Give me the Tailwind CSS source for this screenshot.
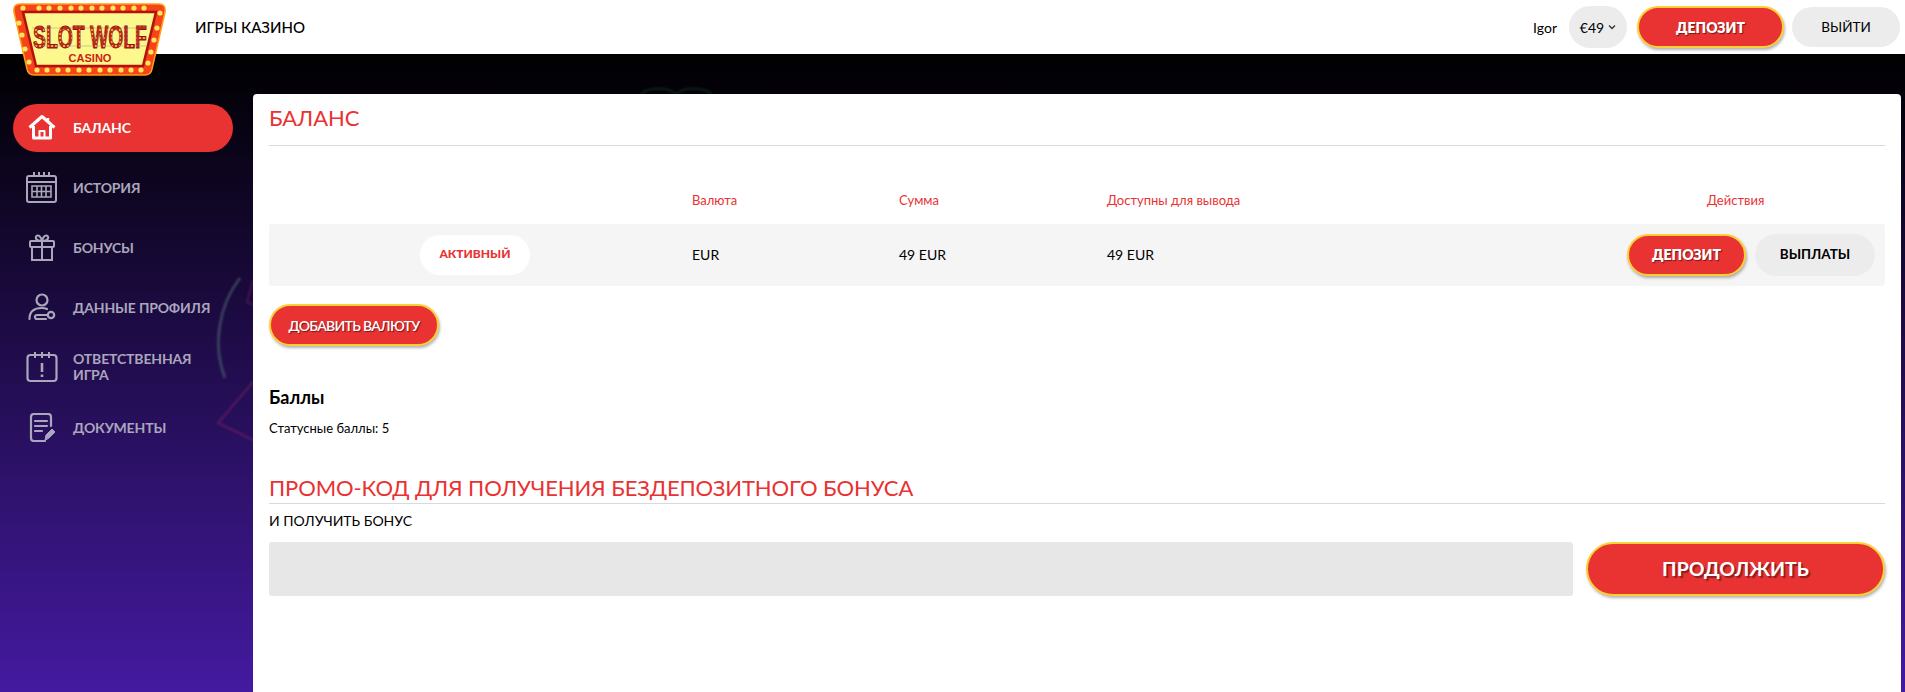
<!DOCTYPE html>
<html lang="ru">
<head>
    <meta charset="UTF-8">
    <meta name="viewport" content="width=device-width, initial-scale=1.0">
    <title>Баланс</title>
    <script src="https://cdn.jsdelivr.net/npm/@tailwindcss/browser@4"></script>
</head>
<body class="relative h-[692px] w-[1905px] overflow-hidden bg-[linear-gradient(to_bottom,#000_54px,#441aa0_692px)] font-['Lato','Noto_Sans',sans-serif] text-black">

    <!-- Decor behind the panel -->
    <svg class="absolute left-0 top-0 blur-[0.8px]" width="1000" height="460" fill="none">
        <path d="M240 278 C219 305 212 345 225 378" stroke="#4a5a6e" stroke-width="2.5" opacity=".75"/>
        <path d="M253 382 L218 423 L253 440" stroke="#6e1f5e" stroke-width="2" opacity=".7"/>
        <path d="M253 280 L247 302 L253 305" stroke="#5a1a58" stroke-width="2" opacity=".7"/>
        <path d="M641 94 C648 87 668 87 676 94 M676 94 C684 87 704 87 712 94" stroke="#0d2418" stroke-width="2"/>
    </svg>

    <!-- Logo -->
    <svg class="absolute left-[13px] top-[3px] z-20" width="153" height="73" viewBox="0 0 153 73">
        <defs>
            <pattern id="bulbs" width="6.4" height="4" patternUnits="userSpaceOnUse">
                <rect width="6.4" height="4" fill="#c3281c"/>
                <ellipse cx="3.2" cy="2" rx="1.76" ry="1.1" fill="#f7c94a"/>
            </pattern>
        </defs>
        <path d="M7 1 H146 Q153 1 152 9 L139 66 Q138 72 132 72 H21 Q15 72 14 66 L1 9 Q0 1 7 1 Z" fill="#f5431b" stroke="#ff9d12" stroke-width="1.5"/>
        <path d="M10 9 H143 L130 63 H23 Z" fill="#fdf88e" stroke="#b3120c" stroke-width="2.5"/>
        <path d="M19 25 H134 M20 43 H133" stroke="#b8b48a" stroke-width=".7"/>
        <g fill="#ffe45c">
            <circle cx="10" cy="5" r="2.6"/><circle cx="26" cy="5" r="2.6"/><circle cx="36" cy="5" r="2.6"/><circle cx="47" cy="5" r="2.6"/><circle cx="58" cy="5" r="2.6"/><circle cx="68" cy="5" r="2.6"/><circle cx="79" cy="5" r="2.6"/><circle cx="89" cy="5" r="2.6"/><circle cx="100" cy="5" r="2.6"/><circle cx="110" cy="5" r="2.6"/><circle cx="121" cy="5" r="2.6"/><circle cx="131" cy="5" r="2.6"/><circle cx="147" cy="10" r="2.6"/>
            <circle cx="6" cy="20" r="2.6"/><circle cx="9" cy="32" r="2.6"/><circle cx="12" cy="46" r="2.6"/><circle cx="16" cy="59" r="2.6"/>
            <circle cx="144" cy="25" r="2.6"/><circle cx="141" cy="37" r="2.6"/><circle cx="138" cy="49" r="2.6"/><circle cx="135" cy="60" r="2.6"/>
            <circle cx="24" cy="67" r="2.6"/><circle cx="34" cy="67" r="2.6"/><circle cx="45" cy="67" r="2.6"/><circle cx="55" cy="67" r="2.6"/><circle cx="66" cy="67" r="2.6"/><circle cx="76" cy="67" r="2.6"/><circle cx="87" cy="67" r="2.6"/><circle cx="97" cy="67" r="2.6"/><circle cx="108" cy="67" r="2.6"/><circle cx="118" cy="67" r="2.6"/><circle cx="128" cy="67" r="2.6"/>
        </g>
        <text transform="translate(77 45) scale(.624 1)" text-anchor="middle" font-family="Liberation Sans" font-weight="700" font-size="31" fill="url(#bulbs)" stroke="#8a1510" stroke-width=".9">SLOT WOLF</text>
        <text x="77" y="59" text-anchor="middle" font-family="Liberation Sans" font-weight="700" font-size="11" fill="#cc1f16">CASINO</text>
    </svg>

    <!-- Header -->
    <header class="relative z-10 flex h-[54px] items-center justify-between bg-white pr-[5px] pl-[195px]">
        <span class="text-[15px] font-medium">ИГРЫ КАЗИНО</span>
        <div class="flex items-center">
            <span class="mr-[12px] text-[14px]">Igor</span>
            <button class="mr-[10px] flex h-[42px] w-[58px] items-center justify-center gap-[4px] rounded-full bg-[#ececec] text-[14px]">
                €49
                <svg width="8" height="6" viewBox="0 0 8 6" fill="none"><path d="M1 1.5 L4 4.5 L7 1.5" stroke="#333" stroke-width="1.3"/></svg>
            </button>
            <button class="mr-[8px] h-[42px] w-[147px] rounded-full border-2 border-[#fdd033] bg-[#e93232] text-[14px] font-extrabold text-white shadow-[1px_2px_3px_rgba(0,0,0,.3)] [text-shadow:1px_1px_1px_rgba(0,0,0,.5)]">ДЕПОЗИТ</button>
            <button class="h-[40px] w-[108px] rounded-full bg-[#ececec] text-[13.5px]">ВЫЙТИ</button>
        </div>
    </header>

    <div class="relative flex pt-[40px] pr-[4px]">
        <!-- Sidebar -->
        <nav class="flex w-[253px] shrink-0 flex-col gap-[12px] pt-[10px] pr-[20px] pl-[13px] text-[14px] font-bold tracking-[-0.15px] text-[#aaa6bb]">
            <a class="flex h-[48px] items-center rounded-full bg-[#e93232] pb-[2px] pl-[15px] text-white">
                <svg class="w-[28px]" height="26" viewBox="0 0 28 26" fill="none" stroke="#fff" stroke-width="3" stroke-linejoin="round">
                    <path d="M1.5 13.5 L14 2.5 L26.5 13.5"/><path d="M5.5 12 V24 H22.5 V12"/><path d="M11.5 24 V17 H16.5 V24" stroke-width="2"/><path d="M20 4 V8" stroke-width="2.4"/>
                </svg>
                <span class="ml-[17px]">БАЛАНС</span>
            </a>
            <a class="flex h-[48px] items-center pb-[2px] pl-[13px]">
                <svg class="w-[32px]" height="32" viewBox="0 0 32 32" fill="none" stroke="#aaa6bb" stroke-width="2">
                    <rect x="1" y="5" width="29" height="26" rx="2"/><path d="M1 11 H30"/><path d="M8 1 V6 M13 1 V6 M18 1 V6 M23 1 V6"/>
                    <path d="M6 15 H25 V26 H6 Z M6 20.5 H25 M11 15 V26 M15.5 15 V26 M20 15 V26" stroke-width="1.6"/>
                </svg>
                <span class="ml-[15px]">ИСТОРИЯ</span>
            </a>
            <a class="flex h-[48px] items-center pb-[2px] pl-[16px]">
                <svg class="w-[26px]" height="27" viewBox="0 0 26 27" fill="none" stroke="#aaa6bb" stroke-width="2">
                    <rect x="1" y="7" width="24" height="6" rx="1"/><path d="M3 13 V26 H23 V13"/><path d="M13 7 V26"/>
                    <path d="M13 7 C9 7 6 5 7 2.5 C8.5 0 12 2 13 7 C14 2 17.5 0 19 2.5 C20 5 17 7 13 7 Z"/>
                </svg>
                <span class="ml-[18px]">БОНУСЫ</span>
            </a>
            <a class="flex h-[48px] items-center pb-[2px] pl-[15px]">
                <svg class="w-[28px]" height="28" viewBox="0 0 28 28" fill="none" stroke="#aaa6bb" stroke-width="2.2" stroke-linecap="round">
                    <circle cx="14" cy="7" r="5.5"/><path d="M1.5 26 C1.5 18 7 15 14 15 C16 15 18 15.5 19 16"/>
                    <circle cx="23" cy="22" r="3.2"/><path d="M20 22 H9 C7 22 6 24 8 26 H18"/>
                </svg>
                <span class="ml-[17px]">ДАННЫЕ ПРОФИЛЯ</span>
            </a>
            <a class="flex h-[48px] items-center pb-[2px] pl-[13px]">
                <svg class="w-[32px]" height="32" viewBox="0 0 32 32" fill="none" stroke="#aaa6bb" stroke-width="2.2">
                    <rect x="1.5" y="4" width="29" height="26" rx="3"/><path d="M9 1 V7 M16 1 V7 M23 1 V7" stroke-width="2"/>
                    <path d="M16 12 V21" stroke-width="2.6"/><path d="M16 23.5 V26" stroke-width="2.6"/>
                </svg>
                <span class="ml-[15px] leading-[16px]">ОТВЕТСТВЕННАЯ<br>ИГРА</span>
            </a>
            <a class="flex h-[48px] items-center pb-[2px] pl-[16px]">
                <svg class="w-[27px]" height="29" viewBox="0 0 27 29" fill="none" stroke="#aaa6bb" stroke-width="2.2" stroke-linecap="round">
                    <path d="M16 28 H5 Q2 28 2 25 V4 Q2 1 5 1 H19 Q22 1 22 4 V13"/><path d="M6 8 H18 M6 13 H18 M6 18 H13"/>
                    <path d="M16 27 L17 22 L23 16 L26 19 L20 25 Z" fill="#aaa6bb" stroke-width="1"/>
                </svg>
                <span class="ml-[17px]">ДОКУМЕНТЫ</span>
            </a>
        </nav>

        <!-- Main panel -->
        <main class="h-[598px] flex-1 rounded-t-[4px] bg-white px-[16px]">
            <h1 class="h-[52px] border-b border-[#d9d9d9] pt-[8px] text-[22px] leading-[32px] tracking-[-0.1px] text-[#e93232]">БАЛАНС</h1>

            <div class="mt-[40px] grid h-[38px] grid-cols-[423px_207px_208px_1fr_280px] items-start text-[13px] leading-[28px] text-[#e93232]">
                <span></span>
                <span>Валюта</span>
                <span>Сумма</span>
                <span>Доступны для вывода</span>
                <span class="pl-[102px]">Действия</span>
            </div>
            <div class="grid h-[62px] grid-cols-[423px_207px_208px_1fr_280px] items-center rounded-[3px] bg-[#f5f5f5] text-[14px]">
                <div class="pl-[151px]">
                    <span class="flex h-[40px] w-[110px] items-center justify-center rounded-full bg-white pb-[2px] text-[12px] font-black text-[#e93232]">АКТИВНЫЙ</span>
                </div>
                <span class="pb-[2px]">EUR</span>
                <span class="pb-[2px]">49 EUR</span>
                <span class="pb-[2px]">49 EUR</span>
                <div class="flex justify-end gap-[9px] pr-[10px]">
                    <button class="h-[42px] w-[119px] rounded-full border-2 border-[#fdd033] bg-[#e93232] pb-[2px] text-[14px] font-extrabold text-white shadow-[1px_2px_3px_rgba(0,0,0,.3)] [text-shadow:1px_1px_1px_rgba(0,0,0,.5)]">ДЕПОЗИТ</button>
                    <button class="h-[42px] w-[120px] rounded-full bg-[#ececec] pb-[2px] text-[13.5px] font-bold">ВЫПЛАТЫ</button>
                </div>
            </div>

            <button class="mt-[18px] h-[42px] w-[170px] rounded-full border-2 border-[#fdd033] bg-[#e93232] text-[14px] font-semibold tracking-[-0.7px] text-white shadow-[1px_2px_3px_rgba(0,0,0,.3)] [text-shadow:1px_1px_1px_rgba(0,0,0,.5)]">ДОБАВИТЬ ВАЛЮТУ</button>

            <h2 class="mt-[39px] text-[18px] leading-[24px] font-bold">Баллы</h2>
            <p class="mt-[9px] text-[13px] leading-[20px]">Статусные баллы: 5</p>

            <h2 class="mt-[35px] h-[31px] border-b border-[#d9d9d9] text-[22px] leading-[30px] tracking-[-0.11px] text-[#e93232]">ПРОМО-КОД ДЛЯ ПОЛУЧЕНИЯ БЕЗДЕПОЗИТНОГО БОНУСА</h2>
            <p class="mt-[7px] text-[14px] leading-[20px]">И ПОЛУЧИТЬ БОНУС</p>
            <div class="mt-[11px] flex gap-[13px]">
                <input class="h-[54px] flex-1 rounded-[3px] bg-[#e7e7e7]">
                <button class="h-[54px] w-[299px] rounded-full border-2 border-[#fdd033] bg-[#e93232] text-[19.5px] font-bold text-white shadow-[1px_2px_3px_rgba(0,0,0,.3)] [text-shadow:2px_2px_1px_rgba(0,0,0,.4)]">ПРОДОЛЖИТЬ</button>
            </div>
        </main>
    </div>
</body>
</html>
